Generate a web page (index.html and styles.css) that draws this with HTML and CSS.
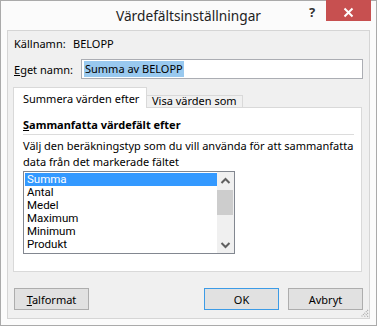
FILE: index.html
```html
<!DOCTYPE html>
<html>
<head>
<meta charset="utf-8">
<link rel="stylesheet" href="styles.css">
</head>
<body>
<div class="window">
  <div class="titlebar">
    <div></div>
    <div class="title">Värdefältsinställningar</div>
    <div class="caption">
      <span class="help">?</span>
      <span class="close"><svg width="45" height="20" viewBox="0 0 45 20"><path d="M18.5 7.5 L26.5 15.5 M26.5 7.5 L18.5 15.5" stroke="#fff" stroke-width="2" fill="none"/></svg></span>
    </div>
  </div>
  <div class="client">
    <div class="row src"><span class="lbl-src">Källnamn:</span><span>BELOPP</span></div>
    <div class="row name"><span class="lbl-name"><u>E</u>get namn:</span><div class="input"><span class="sel">Summa av BELOPP</span></div></div>
    <div class="tabs">
      <div class="tab active">Summera värden efter</div>
      <div class="tab inactive">Visa värden som</div>
    </div>
    <div class="panel">
      <div class="group-title"><u>S</u>ammanfatta värdefält efter</div>
      <div class="desc">Välj den beräkningstyp som du vill använda för att sammanfatta<br>data från det markerade fältet</div>
      <div class="listbox">
        <ul class="items">
          <li class="selected">Summa</li>
          <li>Antal</li>
          <li>Medel</li>
          <li>Maximum</li>
          <li>Minimum</li>
          <li>Produkt</li>
        </ul>
        <div class="scrollbar">
          <div class="arrow"><svg width="17" height="17" viewBox="0 0 17 17"><path d="M4.5 11 L8.5 7 L12.5 11" stroke="#606060" stroke-width="2" fill="none"/></svg></div>
          <div class="thumb"></div>
          <div class="track"></div>
          <div class="arrow"><svg width="17" height="17" viewBox="0 0 17 17"><path d="M4.5 7 L8.5 11 L12.5 7" stroke="#606060" stroke-width="2" fill="none"/></svg></div>
        </div>
      </div>
    </div>
    <div class="buttons">
      <button class="btn"><u>T</u>alformat</button>
      <div class="spacer"></div>
      <button class="btn default">OK</button>
      <button class="btn cancel">Avbryt</button>
    </div>
    <svg class="grip" width="9" height="9" viewBox="0 0 9 9">
      <path d="M8 1 L1 8 M8 4 L4 8 M8 7 L7 8" stroke="#a8a8a8" stroke-width="1.2" stroke-dasharray="1 1" fill="none"/>
    </svg>
  </div>
</div>
</body>
</html>
```
FILE: styles.css
```css
* { box-sizing: border-box; }
body {
  margin: 0;
  background: #fff;
  font-family: "Noto Sans", "Open Sans", sans-serif;
  font-size: 11px;
  color: #000;
}
.window {
  width: 377px;
  height: 326px;
  border: 1px solid #aaaaaa;
  background: #fbfbfb;
  display: flex;
  flex-direction: column;
  padding: 0 6px 6px 6px;
}
.titlebar {
  height: 29px;
  margin: 0 -6px;
  display: grid;
  grid-template-columns: 1fr auto 1fr;
}
.title {
  font-size: 13.7px;
  line-height: 29px;
  color: #222;
}
.caption {
  display: flex;
  justify-content: flex-end;
  align-items: flex-start;
}
.help {
  width: 20px;
  margin-right: 4px;
  text-align: center;
  font-weight: bold;
  font-size: 13px;
  line-height: 22px;
  color: #333;
}
.close {
  width: 45px;
  height: 21px;
  margin-top: -1px;
  margin-right: 5px;
  background: #c75050;
  display: flex;
  align-items: flex-end;
}
.close svg { display: block; }
.client {
  flex: 1;
  position: relative;
  border: 1px solid #d5d5d5;
  background: #f0f0f0;
  padding: 5px 6px 0 6px;
  display: flex;
  flex-direction: column;
}
.row {
  display: flex;
  align-items: center;
}
.src { height: 16px; line-height: 16px; }
.lbl-src { width: 59px; }
.name { margin-top: 7px; height: 20px; }
.lbl-name { width: 67px; }
.input {
  flex: 1;
  height: 20px;
  border: 1px solid #abadb3;
  background: #fff;
  padding: 1px 0 0 2px;
}
.sel {
  display: inline-block;
  height: 16px;
  line-height: 16px;
  padding: 0 1px;
  background: #99c9ef;
  vertical-align: top;
}
.tabs {
  margin: 8px 0 0 -1px;
  height: 20px;
  display: flex;
  align-items: flex-end;
  position: relative;
  z-index: 1;
}
.tab {
  border: 1px solid #d9d9d9;
  border-bottom: none;
}
.tab.active {
  width: 134px;
  height: 21px;
  margin-bottom: -1px;
  background: #fff;
  padding: 3px 0 0 9px;
  line-height: 16px;
  position: relative;
  z-index: 2;
}
.tab.inactive {
  width: 97px;
  height: 12px;
  margin-left: -1px;
  background: #f0f0f0;
  padding: 0 0 0 5px;
  line-height: 9px;
}
.panel {
  margin: 0 1px 0 -1px;
  height: 165px;
  border: 1px solid #d9d9d9;
  background: #fff;
  padding: 9px 7px 0 9px;
}
.group-title {
  font-weight: bold;
  line-height: 16px;
  padding-bottom: 1px;
  border-bottom: 1px solid #dcdcdc;
}
.desc {
  margin-top: 3px;
  line-height: 16px;
}
.listbox {
  margin-top: 1px;
  width: 212px;
  height: 83px;
  border: 1px solid #828790;
  background: #fff;
  display: flex;
}
.items {
  flex: 1;
  list-style: none;
  margin: 0;
  padding: 1px 0 0 1px;
  overflow: hidden;
  font-family: Roboto, "Noto Sans", sans-serif;
  font-size: 11.5px;
}
.items li {
  height: 13px;
  line-height: 13px;
  padding-left: 2px;
}
.items li.selected {
  background: #3399ff;
  color: #fff;
}
.scrollbar {
  width: 17px;
  background: #f0f0f0;
  display: flex;
  flex-direction: column;
}
.arrow { height: 17px; }
.arrow svg { display: block; }
.thumb {
  height: 25px;
  margin: 1px 1px 0 0;
  background: #cdcdcd;
}
.track { flex: 1; }
.buttons {
  margin-top: 16px;
  display: flex;
}
.spacer { flex: 1; }
.btn {
  width: 75px;
  height: 22px;
  border: 1px solid #adadad;
  background: #e1e1e1;
  font-family: "Noto Sans", "Open Sans", sans-serif;
  font-size: 11px;
  color: #000;
  padding: 0;
}
.btn.default { border-color: #3c9be6; }
.cancel { margin-left: 9px; }
.grip {
  position: absolute;
  right: 0;
  bottom: 0;
}
```
